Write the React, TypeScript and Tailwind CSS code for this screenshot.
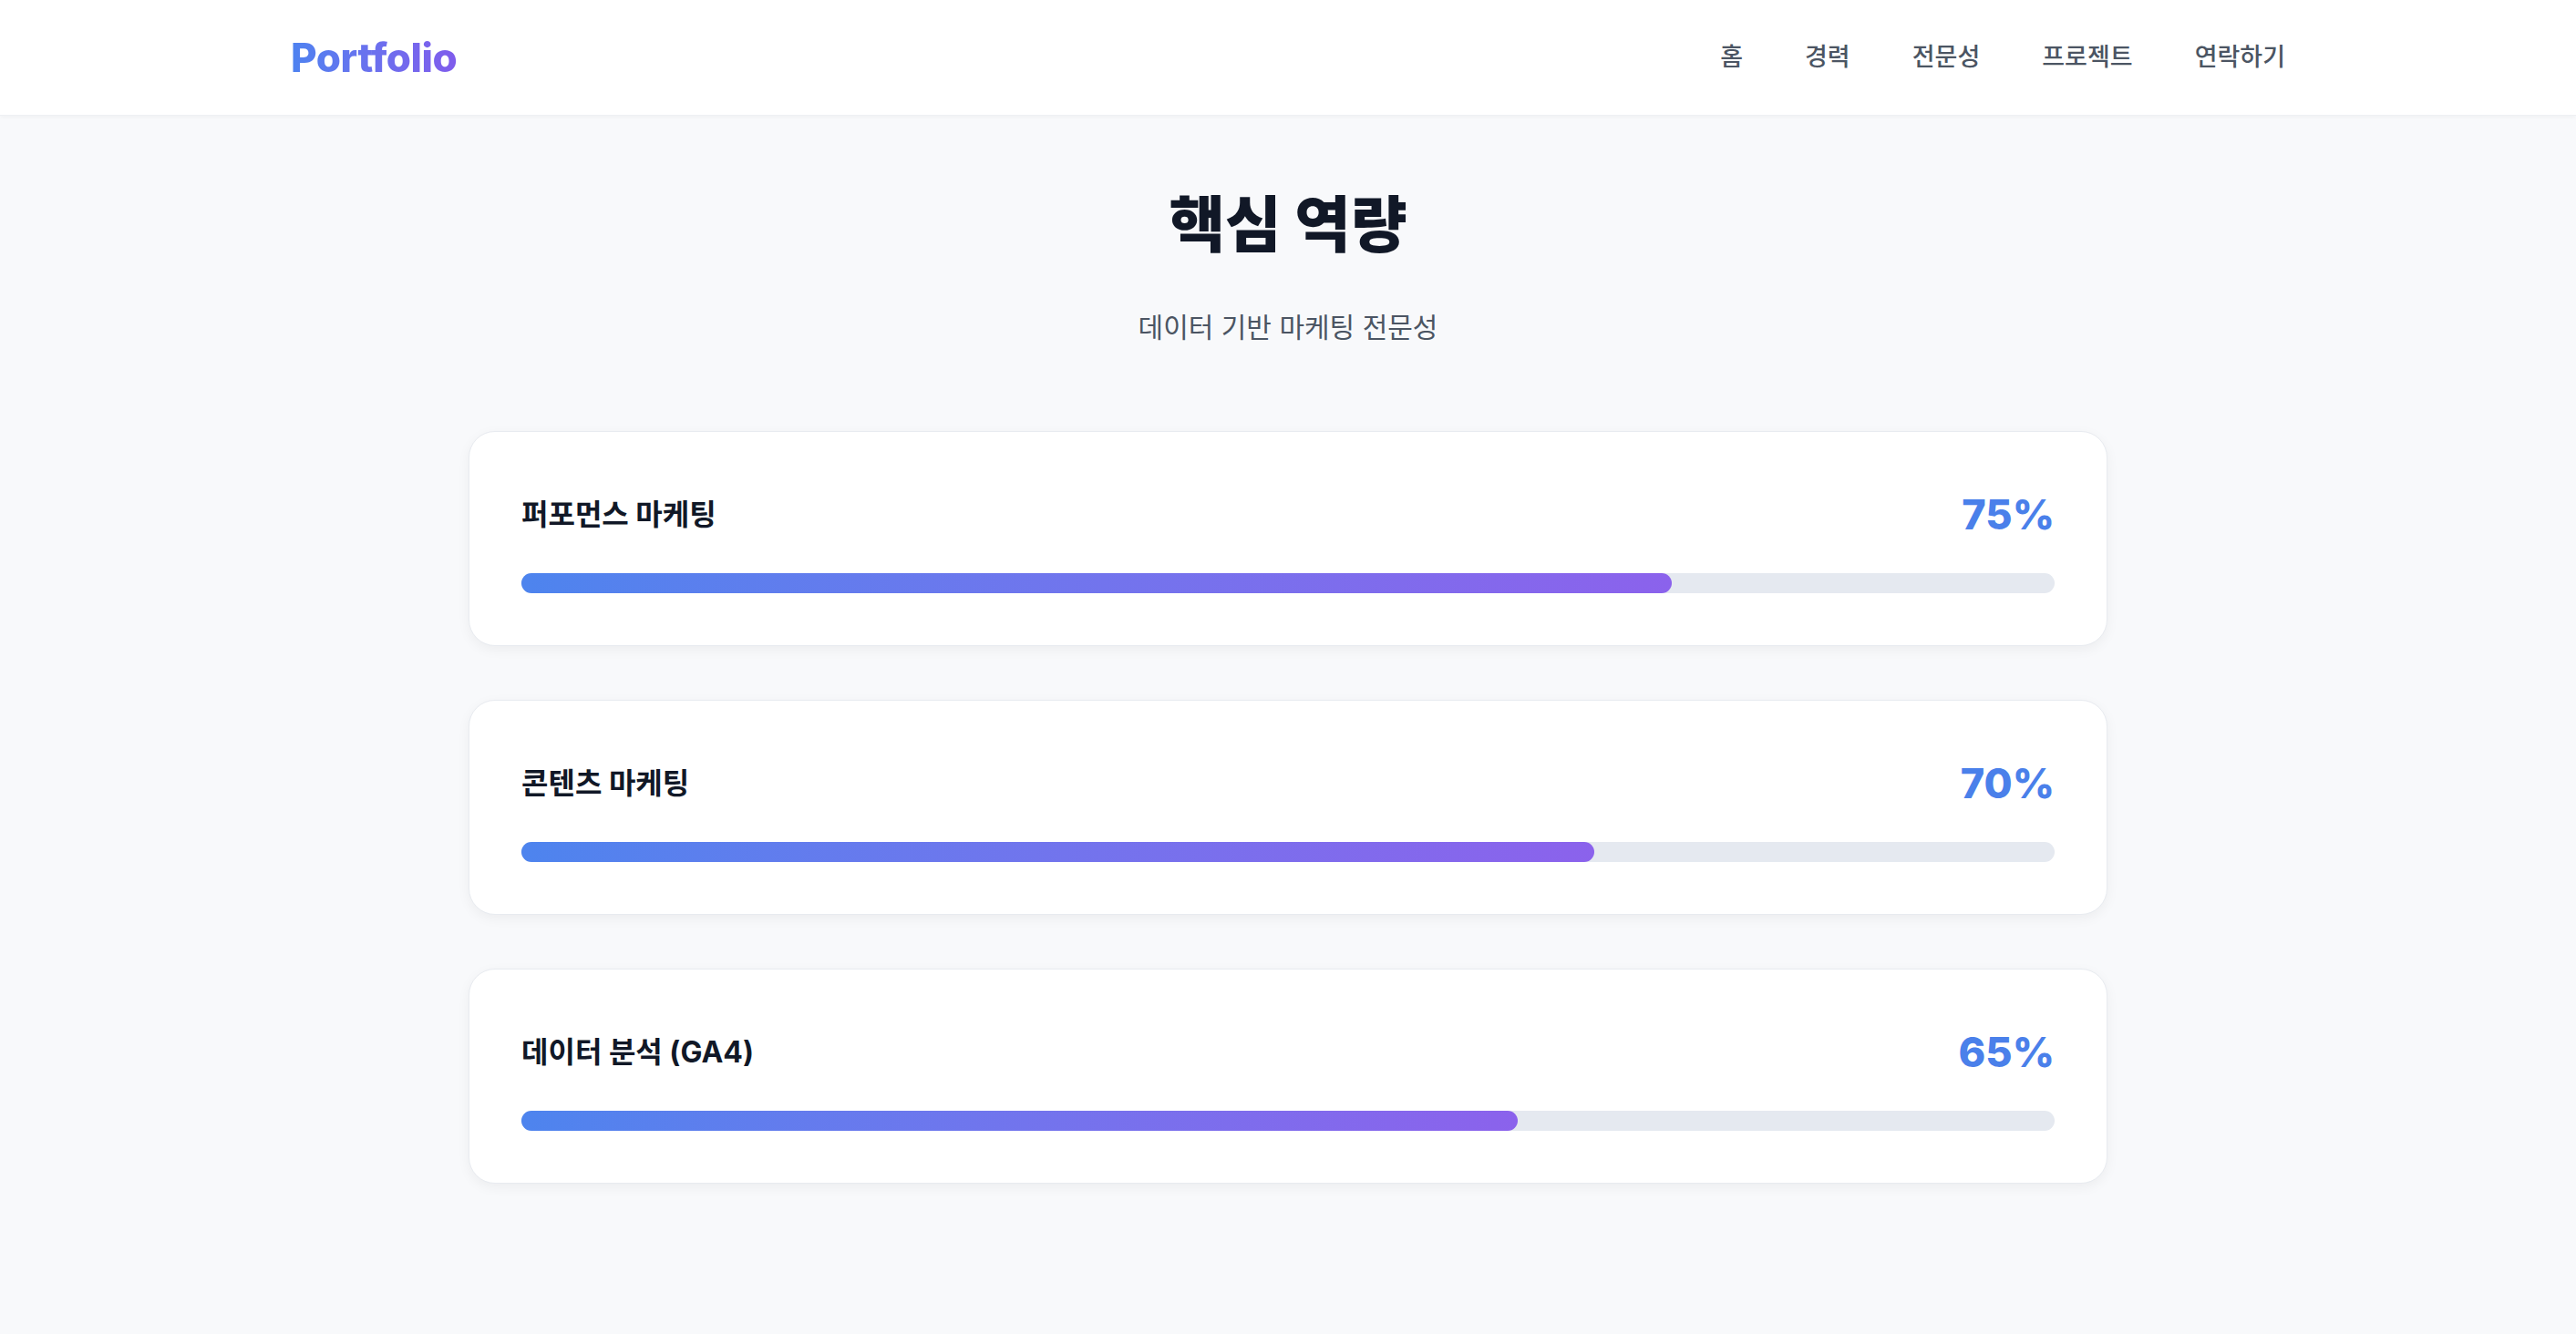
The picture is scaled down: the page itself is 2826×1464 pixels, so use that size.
import React from 'react';

const navItems = ['홈', '경력', '전문성', '프로젝트', '연락하기'];

const skills = [
  { name: '퍼포먼스 마케팅', level: 75 },
  { name: '콘텐츠 마케팅', level: 70 },
  { name: '데이터 분석 (GA4)', level: 65 },
];

const font = { fontFamily: 'Inter, "Noto Sans CJK KR", sans-serif' };

const Header: React.FC = () => (
  <header className="h-[127px] bg-white border-b border-[#eef0f3] shadow-[0_2px_4px_rgba(0,0,0,0.03)]">
    <div className="mx-auto flex h-full w-[2188px] items-center justify-between">
      <div className="bg-gradient-to-r from-[#4d82f0] to-[#7f5cec] bg-clip-text text-[44px] font-extrabold tracking-[-0.5px] text-transparent">
        Portfolio
      </div>
      <nav className="flex items-center gap-[68px]">
        {navItems.map((item) => (
          <a key={item} className="text-[27px] font-medium text-[#4b5563]">
            {item}
          </a>
        ))}
      </nav>
    </div>
  </header>
);

const SkillCard: React.FC<{ name: string; level: number }> = ({ name, level }) => (
  <div className="rounded-[29px] border border-[#e8ebf0] bg-white p-[57px] shadow-[0_4px_14px_rgba(0,0,0,0.05)]">
    <div className="mb-[30px] flex h-[68px] items-center justify-between">
      <span className="text-[32px] font-bold text-[#111827]">{name}</span>
      <span className="text-[45px] font-extrabold text-[#4a80ea]">{level}%</span>
    </div>
    <div className="h-[22px] w-full rounded-full bg-[#e5e9f0]">
      <div
        className="h-full rounded-full bg-gradient-to-r from-[#4d84ee] to-[#8b62ec]"
        style={{ width: `${level}%` }}
      />
    </div>
  </div>
);

export default function App() {
  return (
    <div className="min-h-[1464px] bg-[#f8f9fb]" style={font}>
      <Header />
      <section className="flex flex-col items-center pt-[75px]">
        <h2 className="text-[67px] font-extrabold leading-[90px] text-[#111827]">핵심 역량</h2>
        <p className="mt-[45px] text-[30px] text-[#4b5563]">데이터 기반 마케팅 전문성</p>
        <div className="mt-[91px] flex w-[1798px] flex-col gap-[59px]">
          {skills.map((s) => (
            <SkillCard key={s.name} name={s.name} level={s.level} />
          ))}
        </div>
      </section>
    </div>
  );
}
